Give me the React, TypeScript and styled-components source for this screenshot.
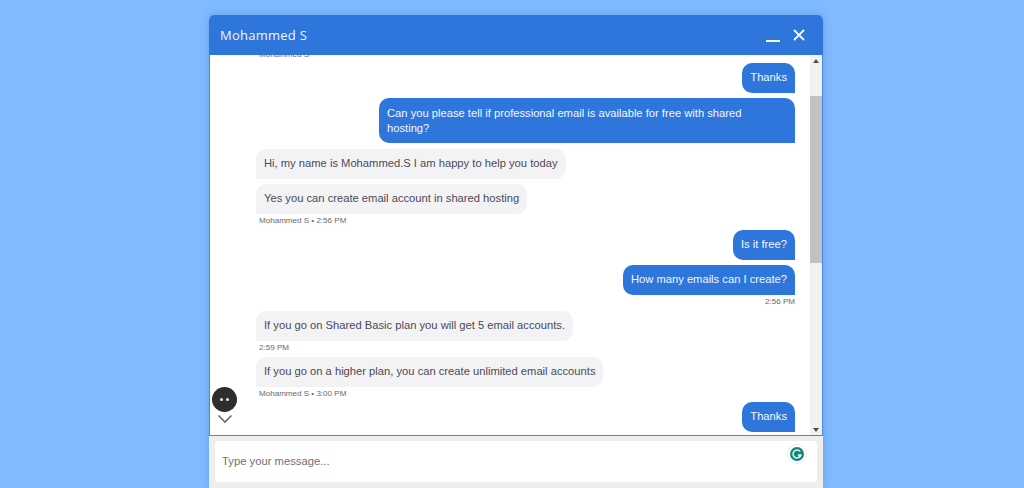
import React from 'react';
import styled, { createGlobalStyle } from 'styled-components';

const GlobalStyle = createGlobalStyle`
  html, body {
    margin: 0;
    height: 100%;
    overflow: hidden;
    background: #80bbff;
  }
`;

const Page = styled.div`
  height: 488px;
  overflow: hidden;
  padding: 15px 0 0 8px;
  box-sizing: border-box;
  display: flex;
  justify-content: center;
  background: #80bbff;
`;

const ChatWindow = styled.div`
  width: 614px;
  height: 473px;
  display: flex;
  flex-direction: column;
  border-radius: 5px 5px 0 0;
  overflow: hidden;
  background: #eeeeef;
  box-shadow: 0 0 8px rgba(40, 90, 170, 0.3);
`;

const Header = styled.header`
  height: 40px;
  flex: none;
  display: flex;
  align-items: center;
  justify-content: space-between;
  padding: 0 17px 0 11px;
  background: #2e75dc;
  color: #f2f6fd;
  font: 13px 'Open Sans', sans-serif;
  letter-spacing: 0.25px;
`;

const HeaderActions = styled.div`
  display: flex;
  align-items: center;
  gap: 11px;
  color: #f4f8fe;
`;

const Body = styled.div`
  position: relative;
  flex: none;
  height: 381px;
  box-sizing: border-box;
  display: flex;
  background: #fff;
  border: solid #4a87df;
  border-width: 0 1px 1px;
  overflow: hidden;
`;

const Log = styled.div`
  flex: 1;
  min-width: 0;
  overflow: hidden;
  padding: 0 15px 0 46px;
  display: flex;
  flex-direction: column;
  font: 11.2px/15px 'Liberation Sans', Arial, sans-serif;
`;

const Clipped = styled.div`
  margin-top: -7px;
  height: 15px;
`;

const Bubble = styled.div<{ $mine?: boolean; $gap?: number; $long?: boolean }>`
  align-self: ${(p) => (p.$mine ? 'flex-end' : 'flex-start')};
  flex: none;
  box-sizing: border-box;
  max-width: 416px;
  padding: ${(p) => (p.$long ? '8px 40px 7px 8px' : '7px 8px 8px')};
  margin-top: ${(p) => p.$gap ?? 5}px;
  border-radius: 10px;
  background: ${(p) => (p.$mine ? '#2e75dc' : '#f3f3f5')};
  color: ${(p) => (p.$mine ? '#f5f8fe' : '#4a4a55')};
  ${(p) => (p.$mine ? 'border-bottom-right-radius: 0;' : 'border-bottom-left-radius: 0;')}
`;

const Meta = styled.div<{ $mine?: boolean }>`
  align-self: ${(p) => (p.$mine ? 'flex-end' : 'flex-start')};
  flex: none;
  margin: 1px ${(p) => (p.$mine ? 0 : '3px')} 0;
  font-size: 8.05px;
  line-height: 11px;
  color: #666a72;
`;

const Scrollbar = styled.div`
  width: 12px;
  flex: none;
  display: flex;
  flex-direction: column;
  background: #f1f1f1;
`;

const Arrow = styled.div<{ $down?: boolean }>`
  height: 11px;
  flex: none;
  display: flex;
  align-items: center;
  justify-content: center;
  &::before {
    content: '';
    border-left: 3.5px solid transparent;
    border-right: 3.5px solid transparent;
    ${(p) => (p.$down ? 'border-top' : 'border-bottom')}: 4px solid #505050;
  }
`;

const Track = styled.div`
  flex: 1;
  padding-top: 30px;
`;

const Thumb = styled.div`
  height: 167px;
  background: #c1c1c1;
`;

const Agent = styled.div`
  position: absolute;
  left: 2px;
  top: 332px;
  width: 25px;
  display: flex;
  flex-direction: column;
  align-items: center;
  gap: 2px;
`;

const Face = styled.div`
  width: 25px;
  height: 25px;
  border-radius: 50%;
  background: #2e2e2e;
  display: flex;
  align-items: center;
  justify-content: center;
  gap: 3px;
`;

const Eye = styled.span`
  width: 3px;
  height: 3px;
  border-radius: 50%;
  background: #e8e8e8;
`;

const Footer = styled.div`
  flex: none;
  padding: 5px 6px;
`;

const Composer = styled.div`
  position: relative;
  height: 41px;
  display: flex;
  align-items: center;
  padding: 0 7px 2px;
  box-sizing: border-box;
  border-radius: 3px;
  background: #fff;
  color: #6f6f75;
  font: 11.25px 'Liberation Sans', Arial, sans-serif;
`;

const GrammarBadge = styled.svg`
  position: absolute;
  top: 3px;
  right: 10px;
`;

const App: React.FC = () => (
  <>
    <GlobalStyle />
    <Page>
      <ChatWindow>
        <Header>
          <span>Mohammed S</span>
          <HeaderActions>
            <svg width="16" height="16" viewBox="0 0 16 16">
              <path d="M1 14h14" stroke="currentColor" strokeWidth="2" />
            </svg>
            <svg width="14" height="14" viewBox="0 0 14 14">
              <path d="M2 2l10 10M12 2L2 12" stroke="currentColor" strokeWidth="1.8" />
            </svg>
          </HeaderActions>
        </Header>
        <Body>
          <Log>
            <Clipped>
              <Meta>Mohammed S</Meta>
            </Clipped>
            <Bubble $mine $gap={0}>Thanks</Bubble>
            <Bubble $mine $long>
              Can you please tell if professional email is available for free with shared hosting?
            </Bubble>
            <Bubble $gap={6}>Hi, my name is Mohammed.S I am happy to help you today</Bubble>
            <Bubble>Yes you can create email account in shared hosting</Bubble>
            <Meta>Mohammed S • 2:56 PM</Meta>
            <Bubble $mine $gap={4}>Is it free?</Bubble>
            <Bubble $mine>How many emails can I create?</Bubble>
            <Meta $mine>2:56 PM</Meta>
            <Bubble $gap={4}>If you go on Shared Basic plan you will get 5 email accounts.</Bubble>
            <Meta>2:59 PM</Meta>
            <Bubble $gap={4}>If you go on a higher plan, you can create unlimited email accounts</Bubble>
            <Meta>Mohammed S • 3:00 PM</Meta>
            <Bubble $mine $gap={3}>Thanks</Bubble>
          </Log>
          <Scrollbar>
            <Arrow />
            <Track>
              <Thumb />
            </Track>
            <Arrow $down />
          </Scrollbar>
          <Agent>
            <Face>
              <Eye />
              <Eye />
            </Face>
            <svg width="16" height="10" viewBox="0 0 16 10">
              <path d="M1.5 1.5L8 8l6.5-6.5" fill="none" stroke="#6b6b6b" strokeWidth="1.6" />
            </svg>
          </Agent>
        </Body>
        <Footer>
          <Composer>
            Type your message...
            <GrammarBadge width="20" height="20" viewBox="0 0 20 20">
              <circle cx="10" cy="10" r="9.5" fill="#fff" stroke="#ececec" />
              <circle cx="10" cy="10" r="7" fill="#11877a" />
              <path
                d="M13.2 7.6A4 4 0 1 0 13.9 11H10.8"
                fill="none"
                stroke="#e6f3f1"
                strokeWidth="1.5"
              />
              <path d="M11.6 12.8l2.4-1.6" stroke="#e6f3f1" strokeWidth="1.3" />
            </GrammarBadge>
          </Composer>
        </Footer>
      </ChatWindow>
    </Page>
  </>
);

export default App;
